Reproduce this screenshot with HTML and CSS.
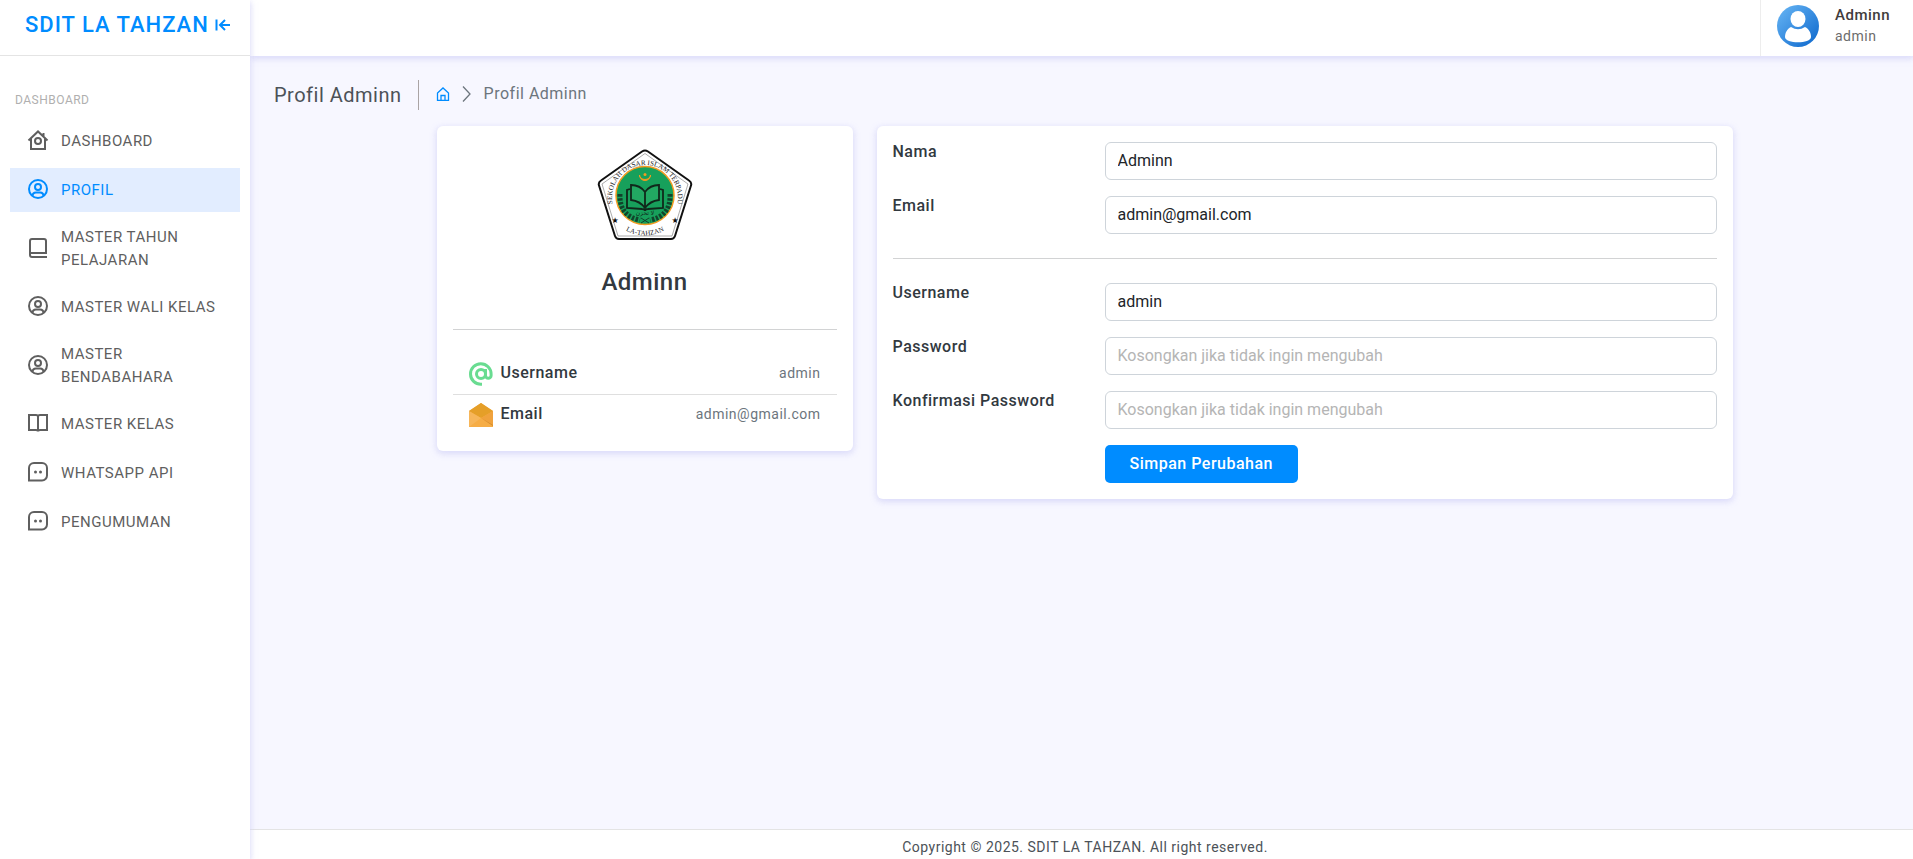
FILE: index.html
```html
<!DOCTYPE html>
<html lang="id">
<head>
<meta charset="utf-8">
<title>Profil Adminn</title>
<link rel="stylesheet" href="styles.css">
</head>
<body>
<svg class="defs" aria-hidden="true">
  <symbol id="i-home" viewBox="0 0 24 24"><path d="m2.500 12.500 9.500-9 9.500 9M5 10.500V21h14V10.500M17.500 8V5"/><circle cx="12" cy="13" r="3"/></symbol>
  <symbol id="i-user" viewBox="0 0 24 24"><circle cx="12" cy="12" r="9"/><circle cx="12" cy="10" r="3"/><path d="M6.500 19c0-2.500 1.500-3.500 3.500-3.500h4c2 0 3.500 1 3.500 3.500"/></symbol>
  <symbol id="i-book" viewBox="0 0 24 24"><path d="M21 21H6a2 2 0 0 1-2-2V5a2 2 0 0 1 2-2h12a2 2 0 0 1 2 2v12H5"/></symbol>
  <symbol id="i-open" viewBox="0 0 24 24"><path d="M3 4h7q2 0 2 1.500Q12 4 14 4h7v15h-7q-2 0-2 1.500Q12 19 10 19H3zM12 5v15"/></symbol>
  <symbol id="i-chat" viewBox="0 0 24 24"><path d="M3 20.500V8a5 5 0 0 1 5-5h8a5 5 0 0 1 5 5v7.500a5 5 0 0 1-5 5z"/><circle class="dot" cx="9.500" cy="12" r="1.500"/><circle class="dot" cx="14.500" cy="12" r="1.500"/></symbol>
</svg>
<div class="layout">
  <aside class="sidebar">
    <div class="brand">
      <span class="brand-name">SDIT LA TAHZAN</span>
      <button class="collapse" type="button" aria-label="Tutup menu"><svg viewBox="0 0 16 16"><path d="M1.500 2.500v11M15 8H5M10 3 5 8l5 5"/></svg></button>
    </div>
    <nav class="menu">
      <div class="menu-label">DASHBOARD</div>
      <a class="item" href="#"><svg class="icon"><use href="#i-home"/></svg><span>DASHBOARD</span></a>
      <a class="item active" href="#"><svg class="icon"><use href="#i-user"/></svg><span>PROFIL</span></a>
      <a class="item" href="#"><svg class="icon"><use href="#i-book"/></svg><span>MASTER TAHUN PELAJARAN</span></a>
      <a class="item" href="#"><svg class="icon"><use href="#i-user"/></svg><span>MASTER WALI KELAS</span></a>
      <a class="item" href="#"><svg class="icon"><use href="#i-user"/></svg><span>MASTER BENDABAHARA</span></a>
      <a class="item" href="#"><svg class="icon"><use href="#i-open"/></svg><span>MASTER KELAS</span></a>
      <a class="item" href="#"><svg class="icon"><use href="#i-chat"/></svg><span>WHATSAPP API</span></a>
      <a class="item" href="#"><svg class="icon"><use href="#i-chat"/></svg><span>PENGUMUMAN</span></a>
    </nav>
  </aside>
  <div class="page">
    <header class="topbar">
      <div class="account">
        <svg class="avatar" viewBox="0 0 42 42">
          <defs><linearGradient id="av" x1="0" y1="0" x2="1" y2="1"><stop offset="0" stop-color="#69b7f5"/><stop offset="1" stop-color="#0b66cc"/></linearGradient></defs>
          <circle cx="21" cy="21" r="21" fill="url(#av)"/>
          <ellipse cx="21" cy="14" rx="7.500" ry="8" fill="#fff"/>
          <path fill="#fff" d="M14 22q7 4.500 14 0c4 2 6 6 6 10 0 7-26 7-26 0 0-4 2-8 6-10z"/>
        </svg>
        <div><p class="account-name">Adminn</p><p class="account-role">admin</p></div>
      </div>
    </header>
    <main class="content">
      <div class="crumbs">
        <h1 class="page-title">Profil Adminn</h1>
        <nav class="trail">
          <a href="#" aria-label="Beranda"><svg class="crumb-home" viewBox="0 0 14 14"><path d="M1.500 6v7.300h11V6L7 1zM5 13V8.500h4V13"/></svg></a>
          <svg class="chevron" viewBox="0 0 10 16"><path d="m1 .5 7 7.500-7 7.500"/></svg>
          <span>Profil Adminn</span>
        </nav>
      </div>
      <div class="container">
      <div class="grid">
        <section class="card">
          <svg class="logo" viewBox="0 0 96 96" role="img">
            <defs><path id="arcTop" d="M19.400 66.500A33 33 0 1 1 76.600 66.500"/><path id="arcBottom" d="M19 75A40 40 0 0 0 77 75"/></defs>
            <path d="M45 3.500q3-2 6 0l41 29q3 2 2 5L78 88q-1 3-4 3H22q-3 0-4-3L2 37.500q-1-3 2-5z" fill="#fff" stroke="#111" stroke-width="2"/>
            <path d="M48 5.500 91 36 75 88H21L5 36z" fill="none" stroke="#888" stroke-width=".7"/>
            <circle cx="48" cy="47.500" r="29" fill="#17a05b" stroke="#f39a21" stroke-width="1.500"/>
            <path d="m33 41-3 1v18l15 1q3 0 3 2 0-2 3-2l15-1V42l-3-1" fill="none" stroke="#10281b" stroke-width="1.800"/>
            <path d="M34 37q9 0 14 7 5-7 14-7v15q-9 1-14 8-5-7-14-8zM48 44v16" fill="#22a862" stroke="#10281b" stroke-width="1.800"/>
            <path d="M42.500 27a5.500 5.500 0 0 0 11 0 5.500 4.500 0 0 1-11 0z" fill="#f39a21" stroke="#f39a21"/><circle cx="48" cy="26.500" r="1.500" fill="#f39a21"/>
            <path d="M23 46q-1 22 20 26M73 46q1 22-20 26" fill="none" stroke="#11432b" stroke-width="5" stroke-dasharray="2.500 1.500"/>
            <path d="m44 75 8-5M52 75l-8-5" stroke="#11432b"/>
            <text class="logo-text"><textPath href="#arcTop" startOffset="50%">SEKOLAH DASAR ISLAM TERPADU</textPath></text>
            <text class="logo-text"><textPath href="#arcBottom" startOffset="50%">LA-TAHZAN</textPath></text>
            <text class="logo-arabic" x="48" y="67">لا تحزن</text>
            <text class="logo-star" x="18" y="75">★</text><text class="logo-star" x="78" y="75">★</text>
          </svg>
          <h2 class="name">Adminn</h2>
          <hr class="rule">
          <dl class="facts">
            <div class="fact">
              <svg class="fact-icon" viewBox="0 0 24 24"><g fill="none" stroke="#69dc91" stroke-width="3"><circle cx="12" cy="12" r="4.500"/><path d="M16.500 7v6.500a2.800 2.800 0 0 0 5.600 0V12A10.300 10.300 0 1 0 12 22.300h1"/></g></svg>
              <dt>Username</dt><dd>admin</dd>
            </div>
            <div class="fact">
              <svg class="fact-icon" viewBox="0 0 24 24"><path d="M0 8 12 0l12 8v16H0z" fill="#f6ad46"/><path d="M0 8 12 0l12 8-12 7z" fill="#e59f28"/><path d="m24 8-12 7 12 8z" fill="#f0a23d"/><path d="m0 8 12 7L0 24z" fill="#f7b65a"/><path d="m12 15 12 7v1z" fill="#cf8b2c"/></svg>
              <dt>Email</dt><dd>admin@gmail.com</dd>
            </div>
          </dl>
        </section>
        <section class="card">
          <form class="form">
            <label for="nama">Nama</label><input id="nama" type="text" value="Adminn">
            <label for="email">Email</label><input id="email" type="email" value="admin@gmail.com">
            <hr class="rule form-rule">
            <label for="username">Username</label><input id="username" type="text" value="admin">
            <label for="password">Password</label><input id="password" type="password" placeholder="Kosongkan jika tidak ingin mengubah">
            <label for="confirm">Konfirmasi Password</label><input id="confirm" type="password" placeholder="Kosongkan jika tidak ingin mengubah">
            <button class="save" type="button">Simpan Perubahan</button>
          </form>
        </section>
      </div>
      </div>
    </main>
    <footer class="footer">Copyright © 2025. SDIT LA TAHZAN. All right reserved.</footer>
  </div>
</div>
</body>
</html>
```
FILE: styles.css
```css
* { box-sizing: border-box; }
body { margin: 0; font-family: Roboto, "Liberation Sans", sans-serif; font-size: 16px; line-height: 24px; letter-spacing: 0.5px; color: #4c5258; background: #f7f7ff; }
h1, h2, p, dl, dd, hr { margin: 0; }
svg { display: block; flex: none; }
.defs { position: absolute; width: 0; height: 0; }
.layout { display: flex; min-height: 100vh; }

.sidebar { flex: none; width: 250px; background: #fff; box-shadow: 0 2px 6px rgba(218, 218, 253, 0.65), 0 2px 6px rgba(206, 206, 238, 0.54); z-index: 2; }
.brand { display: flex; align-items: center; gap: 6px; height: 56px; padding: 0 16px 6px 25px; border-bottom: 1px solid #e4e4e4; color: #008cff; }
.brand-name { font-size: 22px; font-weight: 500; letter-spacing: 1px; white-space: nowrap; }
.collapse { padding: 0; border: 0; background: none; color: inherit; }
.collapse svg { width: 16px; height: 16px; fill: none; stroke: currentColor; stroke-width: 2; }
.menu { display: flex; flex-direction: column; gap: 5px; padding: 34px 10px 10px; }
.menu-label { padding: 0 5px; margin-bottom: 4px; font-size: 12px; line-height: 20px; color: #b0afaf; }
.item { display: flex; align-items: center; gap: 11px; padding: 9px 15px 8px 16px; font-size: 15px; line-height: 23px; color: #5f5f5f; text-decoration: none; }
.item.active { color: #008cff; background: #e2edff; }
.icon { width: 24px; height: 24px; margin-bottom: 3px; fill: none; stroke: currentColor; stroke-width: 2; }
.dot { fill: currentColor; stroke: none; }

.page { flex: 1; min-width: 0; display: flex; flex-direction: column; }
.topbar { display: flex; justify-content: flex-end; height: 56px; background: #fff; box-shadow: 0 2px 6px rgba(218, 218, 253, 0.65), 0 2px 6px rgba(206, 206, 238, 0.54); }
.account { display: flex; gap: 16px; padding: 5px 23px 0 16px; border-left: 1px solid #ededed; }
.avatar { width: 42px; height: 42px; }
.account-name { font-size: 15px; font-weight: 500; line-height: 20px; color: #413c3c; }
.account-role { font-size: 14px; line-height: 22px; color: #6c6c6c; }

.content { flex: 1; padding: 24px; }
.crumbs { display: flex; align-items: center; height: 30px; margin-bottom: 16px; }
.page-title { padding-right: 16px; border-right: 1px solid #aaa4a4; font-size: 20px; font-weight: 400; line-height: 30px; }
.trail { display: flex; align-items: center; padding: 0 0 2px 17px; gap: 12px; color: #6c757d; }
.trail a { color: #008cff; }
.crumb-home { width: 14px; height: 14px; fill: none; stroke: currentColor; stroke-width: 1.3; }
.chevron { width: 10px; height: 16px; fill: none; stroke: currentColor; stroke-width: 1.3; }

.container { padding-left: 6px; }
.grid { display: grid; grid-template-columns: 416fr 856fr; gap: 24px; align-items: start; max-width: 1296px; margin: 0 auto; }
.card { padding: 16px; border-radius: 6px; background: #fff; box-shadow: 0 2px 6px rgba(218, 218, 253, 0.65), 0 2px 6px rgba(206, 206, 238, 0.54); }
.logo { width: 96px; height: 96px; margin: 6px auto 0; }
.logo-text { font-family: "Liberation Serif", serif; font-size: 7px; letter-spacing: 0; text-anchor: middle; fill: #222; }
.logo-arabic { font-family: "DejaVu Sans", sans-serif; font-size: 6px; letter-spacing: 0; text-anchor: middle; fill: #10281b; }
.logo-star { font-family: "DejaVu Sans", sans-serif; font-size: 8px; letter-spacing: 0; text-anchor: middle; fill: #111; }
.name { margin: 23px 0 32px; font-size: 24px; font-weight: 500; line-height: 30px; text-align: center; color: #32393f; }
.rule { height: 1px; border: 0; background: #d2d3d4; }
.facts { padding-top: 24px; }
.fact { display: flex; align-items: center; gap: 8px; height: 41px; padding: 0 16px; }
.fact:first-child { height: 40px; }
.fact-icon { width: 24px; height: 24px; }
.fact + .fact { border-top: 1px solid #dfdfdf; }
.fact dt { padding-bottom: 2px; font-weight: 500; color: #32393f; }
.fact dd { margin-left: auto; padding-bottom: 2px; font-size: 14px; color: #6c757d; }

.form { display: grid; grid-template-columns: 212fr 612fr; row-gap: 16px; }
.form label { font-weight: 500; line-height: 20px; color: #32393f; }
.form input { width: 100%; height: 38px; padding: 5px 12px 7px; border: 1px solid #ced4da; border-radius: 6px; font: inherit; letter-spacing: 0; color: #212529; background: #fff; }
.form input::placeholder { color: #b5b5b5; }
.form-rule { grid-column: 1 / -1; margin: 8px 0; }
.save { grid-column: 2; justify-self: start; height: 38px; padding: 0 25px; border: 0; border-radius: 5px; font: inherit; font-weight: 500; letter-spacing: inherit; color: #fff; background: #008cff; }
.footer { height: 30px; padding-left: 7px; border-top: 1px solid #e4e4e4; background: #fff; font-size: 14px; line-height: 34px; text-align: center; }
```
